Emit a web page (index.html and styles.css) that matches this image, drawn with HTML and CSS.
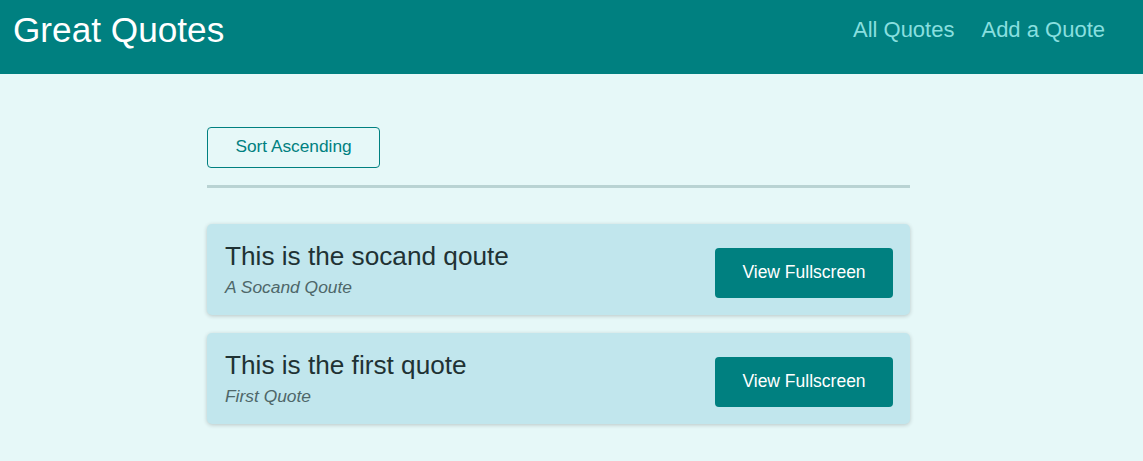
FILE: index.html
```html
<!DOCTYPE html>
<html lang="en">
<head>
<meta charset="utf-8">
<title>Great Quotes</title>
<link rel="stylesheet" href="styles.css">
</head>
<body>
<header class="header">
  <div class="logo">Great Quotes</div>
  <nav class="nav">
    <a class="nav-link" href="#">All Quotes</a>
    <a class="nav-link" href="#">Add a Quote</a>
  </nav>
</header>
<main class="main">
  <div class="sorting">
    <button class="sort-btn">Sort Ascending</button>
  </div>
  <ul class="list">
    <li class="item">
      <figure class="quote">
        <blockquote class="quote-text">This is the socand qoute</blockquote>
        <figcaption class="quote-author">A Socand Qoute</figcaption>
      </figure>
      <a class="btn" href="#">View Fullscreen</a>
    </li>
    <li class="item">
      <figure class="quote">
        <blockquote class="quote-text">This is the first quote</blockquote>
        <figcaption class="quote-author">First Quote</figcaption>
      </figure>
      <a class="btn" href="#">View Fullscreen</a>
    </li>
  </ul>
</main>
</body>
</html>
```
FILE: styles.css
```css
* { box-sizing: border-box; }
html, body {
  margin: 0;
  padding: 0;
}
body {
  font-family: "Liberation Sans", Arial, sans-serif;
  background: #e6f8f8;
  height: 461px;
  overflow: hidden;
}
.header {
  height: 74px;
  background: #008080;
  display: flex;
  align-items: center;
  justify-content: space-between;
  padding: 0 38px 14px 13px;
}
.logo {
  color: #ffffff;
  font-size: 35.2px;
  line-height: 40px;
}
.nav {
  display: flex;
  gap: 27px;
  margin-bottom: 2px;
}
.nav-link {
  color: #88dfdf;
  text-decoration: none;
  font-size: 22px;
  line-height: 25px;
}
.main {
  width: 703px;
  margin-left: 207px;
  padding-top: 53px;
}
.sorting {
  padding-bottom: 17px;
  border-bottom: 3px solid #b9d3d3;
}
.sort-btn {
  font-family: "Liberation Sans", Arial, sans-serif;
  font-size: 17.3px;
  line-height: 20px;
  color: #008080;
  background: transparent;
  border: 1px solid #008080;
  border-radius: 4px;
  padding: 8px 27px 11px;
  height: 41px;
  width: 173px;
  cursor: pointer;
}
.list {
  list-style: none;
  margin: 36px 0 0;
  padding: 0;
  display: flex;
  flex-direction: column;
  gap: 18px;
}
.item {
  background: #c1e6ed;
  border-radius: 5px;
  box-shadow: 0 1px 4px rgba(0, 0, 0, 0.2);
  padding: 16px 17px 18px 18px;
  display: flex;
  align-items: center;
  justify-content: space-between;
  height: 91px;
}
.quote {
  margin: 0;
}
.quote-text {
  margin: 0 0 6px;
  font-size: 26.2px;
  line-height: 30px;
  color: #1f3234;
}
.quote-author {
  font-style: italic;
  font-size: 17.4px;
  line-height: 20px;
  color: #4e6769;
}
.btn {
  display: block;
  margin-top: 9px;
  width: 178px;
  height: 50px;
  line-height: 49px;
  text-align: center;
  background: #008080;
  color: #ffffff;
  text-decoration: none;
  font-size: 17.5px;
  border-radius: 4px;
}
```
